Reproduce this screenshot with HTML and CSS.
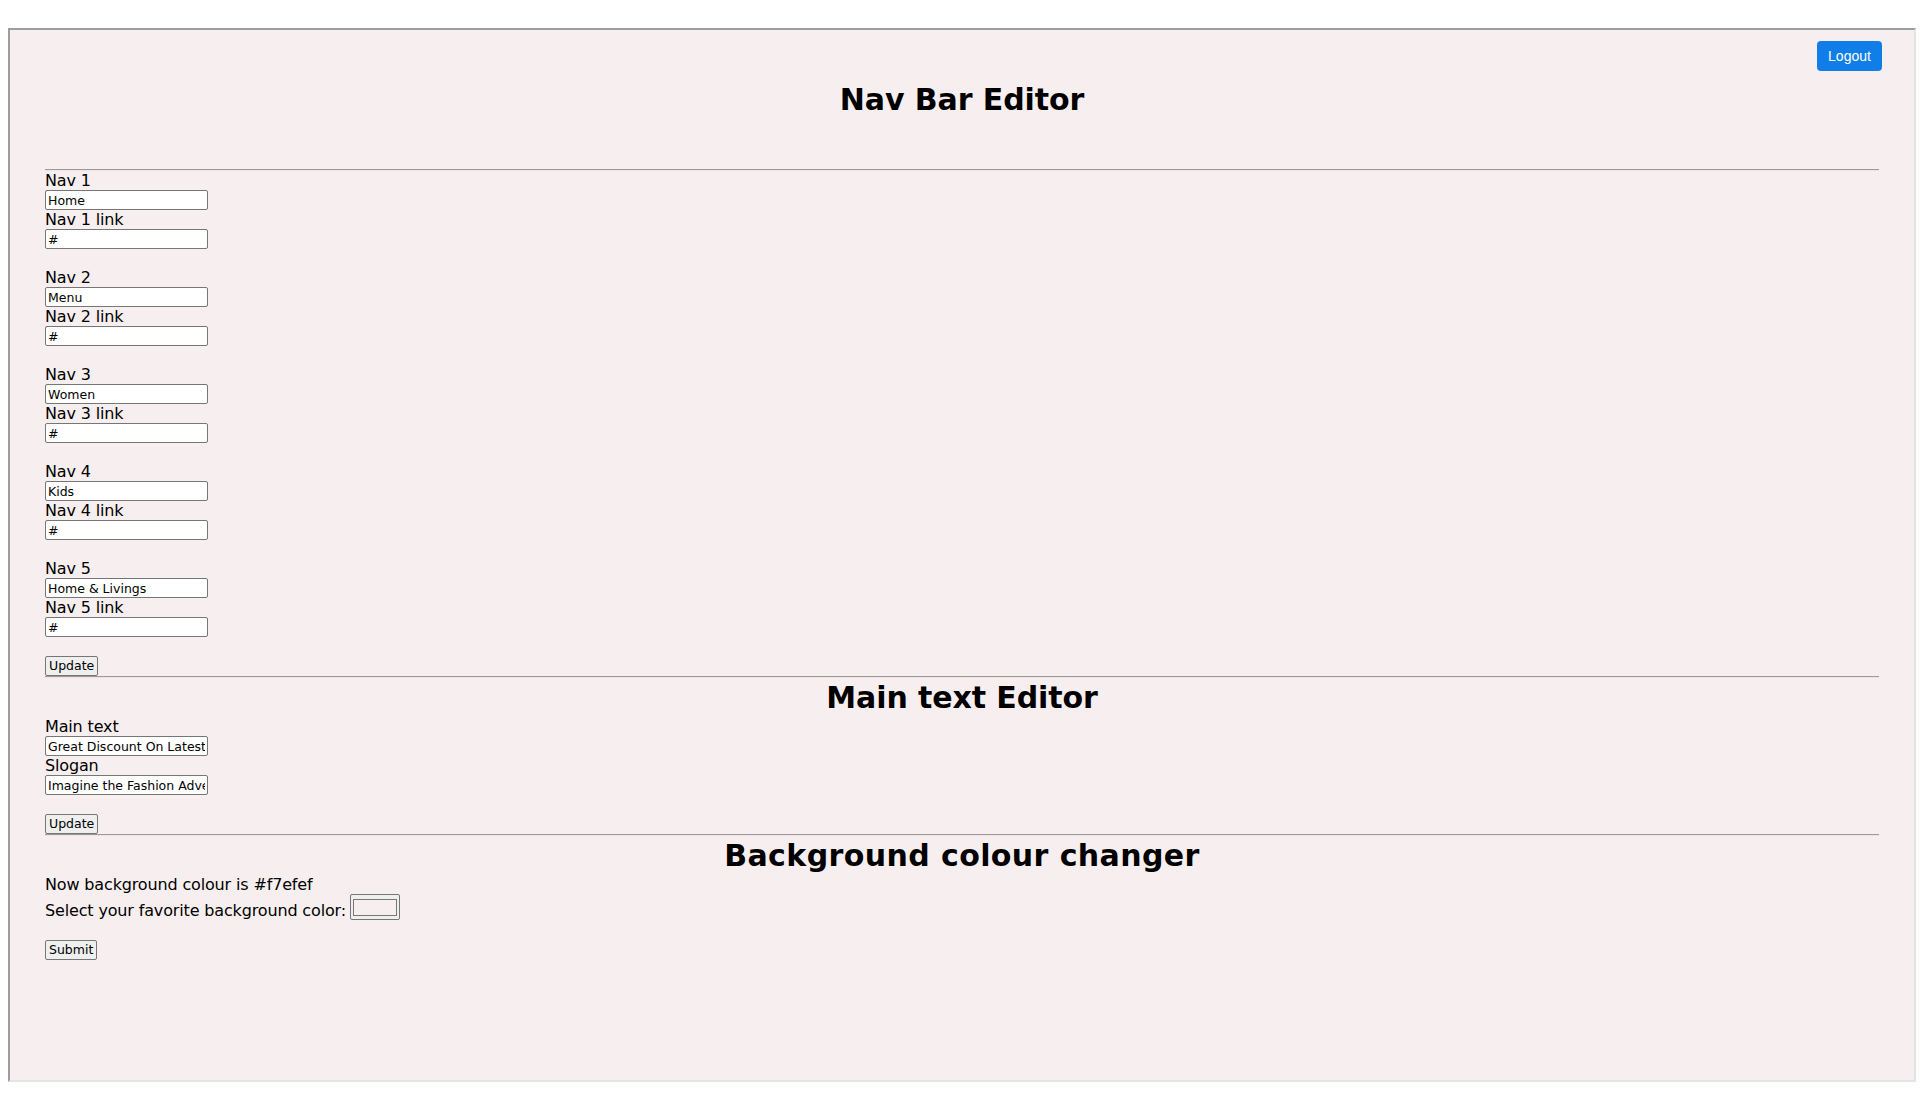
FILE: index.html
```html
<!DOCTYPE html>
<html lang="en">
<head>
<meta charset="utf-8">
<title>Admin Panel</title>
<link rel="stylesheet" href="styles.css">
</head>
<body>
<div class="page">
  <div class="frame">
    <button class="logout" type="button">Logout</button>
    <div class="content">
      <h1 class="heading heading-top">Nav Bar Editor</h1>
      <hr class="rule rule-top">
      <form class="editor">
        <div class="group">
          <label class="field-label">Nav 1</label>
          <input class="field" type="text" value="Home">
          <label class="field-label">Nav 1 link</label>
          <input class="field" type="text" value="#">
        </div>
        <div class="group">
          <label class="field-label">Nav 2</label>
          <input class="field" type="text" value="Menu">
          <label class="field-label">Nav 2 link</label>
          <input class="field" type="text" value="#">
        </div>
        <div class="group">
          <label class="field-label">Nav 3</label>
          <input class="field" type="text" value="Women">
          <label class="field-label">Nav 3 link</label>
          <input class="field" type="text" value="#">
        </div>
        <div class="group">
          <label class="field-label">Nav 4</label>
          <input class="field" type="text" value="Kids">
          <label class="field-label">Nav 4 link</label>
          <input class="field" type="text" value="#">
        </div>
        <div class="group">
          <label class="field-label">Nav 5</label>
          <input class="field" type="text" value="Home &amp; Livings">
          <label class="field-label">Nav 5 link</label>
          <input class="field" type="text" value="#">
        </div>
        <button class="btn" type="button">Update</button>
      </form>
      <hr class="rule">
      <h1 class="heading">Main text Editor</h1>
      <form class="editor">
        <div class="group">
          <label class="field-label">Main text</label>
          <input class="field" type="text" value="Great Discount On Latest Fashion">
          <label class="field-label">Slogan</label>
          <input class="field" type="text" value="Imagine the Fashion Adventure">
        </div>
        <button class="btn" type="button">Update</button>
      </form>
      <hr class="rule">
      <h1 class="heading heading-wide">Background colour changer</h1>
      <form class="editor">
        <p class="text-line">Now background colour is #f7efef</p>
        <div class="color-row">
          <span class="text-line">Select your favorite background color:</span>
          <input class="color-input" type="color" value="#f7efef">
        </div>
        <button class="btn btn-submit" type="button">Submit</button>
      </form>
    </div>
  </div>
</div>
</body>
</html>
```
FILE: styles.css
```css
html, body {
  margin: 0;
  padding: 0;
  background: #ffffff;
}

.page {
  padding: 28px 0 0 8px;
}

.frame {
  position: relative;
  box-sizing: border-box;
  width: 1908px;
  height: 1054px;
  background: #f7efef;
  border-style: solid;
  border-width: 2px;
  border-color: #9d9d9d #e4e4e4 #e4e4e4 #9d9d9d;
  font-family: "DejaVu Sans", "Noto Sans", sans-serif;
  color: #000;
}

.logout {
  position: absolute;
  top: 11px;
  right: 32px;
  width: 65px;
  height: 30px;
  padding: 0;
  border: none;
  border-radius: 4px;
  background: #0f7ee8;
  color: #ffffff;
  font-family: "Liberation Sans", Arial, sans-serif;
  font-size: 14px;
  line-height: 30px;
}

.content {
  padding: 0 35px;
}

.heading {
  margin: 0;
  font-size: 30px;
  font-weight: 700;
  line-height: 39px;
  height: 39px;
  text-align: center;
  letter-spacing: -0.1px;
}

.heading-top {
  margin-top: 50px;
}

.heading-top + .rule-top {
  margin-top: 50px;
}

.heading-wide {
  letter-spacing: 0.4px;
}

.rule {
  margin: 0;
  height: 0;
  border: none;
  border-top: 1px solid #9a9a9a;
  border-bottom: 1px solid #ebe5e5;
}

.editor {
  margin: 0;
}

.group {
  margin-bottom: 19px;
}

.field-label {
  display: block;
  height: 19px;
  font-size: 16px;
  line-height: 19px;
  letter-spacing: -0.15px;
}

.field {
  display: block;
  box-sizing: border-box;
  width: 163px;
  height: 20px;
  margin: 0;
  padding: 0 2px;
  border: 1px solid #767676;
  border-radius: 2px;
  background: #ffffff;
  color: #000;
  font-family: "DejaVu Sans", sans-serif;
  font-size: 12.5px;
  line-height: 18px;
  outline: none;
}

.btn {
  display: block;
  box-sizing: border-box;
  height: 20px;
  margin: 0;
  padding: 0 3px;
  border: 1px solid #767676;
  border-radius: 2px;
  background: #efefef;
  color: #000;
  font-family: "DejaVu Sans", sans-serif;
  font-size: 12.5px;
  line-height: 18px;
}

.btn-submit {
  margin-top: 20px;
}

.text-line {
  margin: 0;
  font-size: 16px;
  line-height: 19px;
  letter-spacing: -0.15px;
}

p.text-line {
  height: 19px;
}

.color-row {
  display: flex;
  align-items: flex-end;
  height: 26px;
  gap: 4px;
}

.color-row .text-line {
  display: block;
}

.color-input {
  box-sizing: border-box;
  width: 50px;
  height: 26px;
  margin: 0;
  padding: 0;
  border: 1px solid #767676;
  border-radius: 2px;
  background: #efefef;
  -webkit-appearance: none;
  appearance: none;
}

.color-input::-webkit-color-swatch-wrapper {
  padding: 4px 2px 3px 2px;
}

.color-input::-webkit-color-swatch {
  border: 1px solid #777777;
  border-radius: 0;
}
```
